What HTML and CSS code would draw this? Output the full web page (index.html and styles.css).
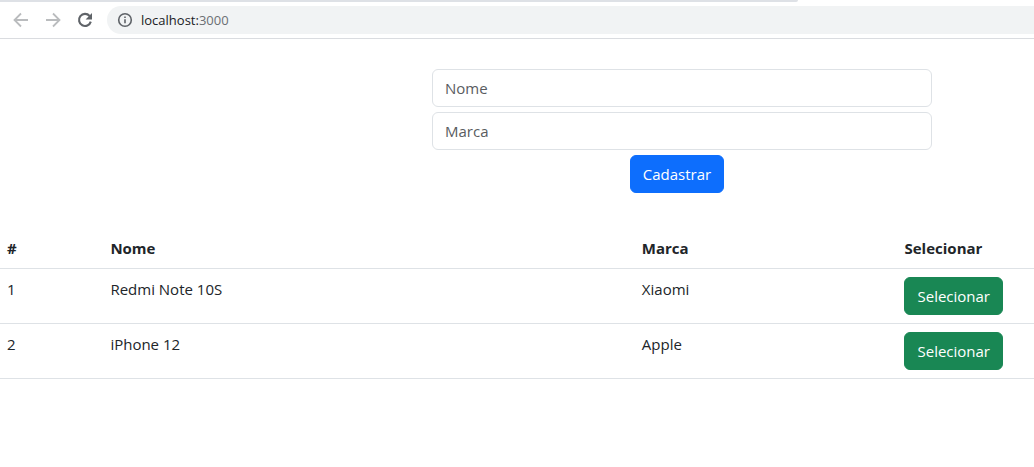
FILE: index.html
```html
<!DOCTYPE html>
<html lang="pt-BR">
<head>
<meta charset="utf-8">
<meta name="viewport" content="width=device-width, initial-scale=1">
<title>localhost:3000</title>
<link rel="stylesheet" href="styles.css">
</head>
<body>
<header class="browser">
  <div class="tab-strip"></div>
  <div class="toolbar">
    <nav class="nav">
      <button class="nav-button muted" type="button" aria-label="Voltar">
        <svg viewBox="0 0 16 16"><path d="M15 8H2M8 1.5 1.5 8 8 14.5"/></svg>
      </button>
      <button class="nav-button muted" type="button" aria-label="Avançar">
        <svg viewBox="0 0 16 16"><path d="M1 8h13M8 1.5 14.5 8 8 14.5"/></svg>
      </button>
      <button class="nav-button" type="button" aria-label="Recarregar">
        <svg viewBox="0 0 16 16"><path class="reload" d="M12.6 4A6 6 0 1 0 13.8 9.6"/><path class="solid" d="M15 1v6.4H8.6Z"/></svg>
      </button>
    </nav>
    <div class="address">
      <svg class="info" viewBox="0 0 16 16"><circle cx="8" cy="8" r="6.3"/><path d="M8 7.2v4M8 4.5v1.6"/></svg>
      <span class="url">localhost:<span class="port">3000</span></span>
    </div>
  </div>
</header>
<main>
  <form class="form">
    <input class="field" type="text" placeholder="Nome" aria-label="Nome">
    <input class="field" type="text" placeholder="Marca" aria-label="Marca">
    <button class="button primary" type="button">Cadastrar</button>
  </form>
  <table class="table">
    <colgroup><col class="col-id"><col class="col-name"><col class="col-brand"><col></colgroup>
    <thead>
      <tr><th scope="col">#</th><th scope="col">Nome</th><th scope="col">Marca</th><th scope="col">Selecionar</th></tr>
    </thead>
    <tbody>
      <tr><td>1</td><td>Redmi Note 10S</td><td>Xiaomi</td><td><button class="button success" type="button">Selecionar</button></td></tr>
      <tr><td>2</td><td>iPhone 12</td><td>Apple</td><td><button class="button success" type="button">Selecionar</button></td></tr>
    </tbody>
  </table>
</main>
</body>
</html>
```
FILE: styles.css
```css
* {
  box-sizing: border-box;
}

body {
  margin: 0;
  background: #fff;
  color: #212529;
  font: 15px/24px "Segoe UI", "Open Sans", sans-serif;
}

.browser {
  border-bottom: 1px solid #dadce0;
}

.tab-strip {
  width: 77.2%;
  height: 2px;
  background: #dee1e6;
  border-bottom-right-radius: 2px;
}

.toolbar {
  display: flex;
  align-items: center;
  gap: 14px;
  padding: 4px 0 4px 13px;
}

.nav {
  display: flex;
  gap: 16px;
}

.nav-button {
  display: flex;
  padding: 0;
  border: 0;
  background: none;
  color: #5f6368;
}

.nav-button.muted {
  color: #babcbe;
}

.nav-button svg,
.info {
  width: 16px;
  height: 16px;
  fill: none;
  stroke: currentColor;
  stroke-width: 1.8;
}

.nav-button .reload {
  stroke-width: 2.1;
}

.nav-button .solid {
  fill: currentColor;
  stroke: none;
}

.address {
  display: flex;
  flex: 1;
  align-items: center;
  gap: 8px;
  height: 28px;
  padding-left: 10px;
  border-radius: 14px 0 0 14px;
  background: #f1f3f4;
}

.info {
  color: #5f6368;
  stroke-width: 1.6;
}

.url {
  color: #202124;
  font-size: 13px;
}

.port {
  color: #6b6f73;
}

.form {
  display: flex;
  flex-direction: column;
  gap: 5px;
  width: 500px;
  max-width: 100%;
  margin: 30px 102px 0 auto;
}

.field {
  width: 100%;
  height: 38px;
  padding: 6px 12px;
  border: 1px solid #dee2e6;
  border-radius: 6px;
  background: #fff;
  color: #212529;
  font: inherit;
}

.field::placeholder {
  color: #595c5f;
  opacity: 1;
}

.button {
  height: 38px;
  padding: 6px 12px;
  border: 1px solid transparent;
  border-radius: 6px;
  color: #fff;
  font: inherit;
  vertical-align: top;
}

.primary {
  align-self: center;
  margin-right: 10px;
  background: #0d6efd;
  background-clip: border-box;
  border-color: #0d6efd;
}

.success {
  background: #198754;
  border-color: #198754;
}

.table {
  width: 100%;
  margin-top: 35px;
  border-collapse: separate;
  border-spacing: 0;
  table-layout: fixed;
}

.col-id {
  width: 10%;
}

.col-name {
  width: 51.4%;
}

.col-brand {
  width: 25.4%;
}

.table th,
.table td {
  padding: 8px 7px;
  border-bottom: 1px solid #dee2e6;
  text-align: left;
  vertical-align: top;
}
```
